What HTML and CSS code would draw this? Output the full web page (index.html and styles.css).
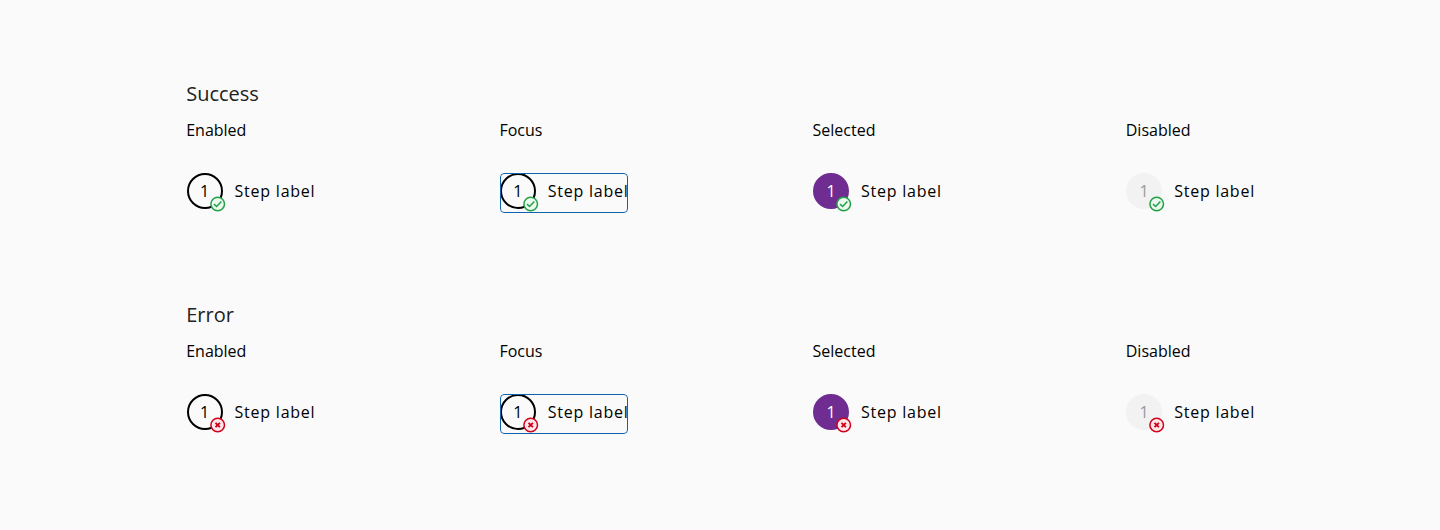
FILE: index.html
```html
<!DOCTYPE html>
<html lang="en">
<head>
<meta charset="utf-8">
<title>Step states</title>
<link rel="stylesheet" href="styles.css">
</head>
<body>
<svg width="0" height="0" class="defs">
  <symbol id="ok" viewBox="0 0 16 16"><circle cx="7.7" cy="8" r="6.8" fill="#eafaef" stroke="#24a148" stroke-width="1.5"/><path d="M4 8.1 6.6 10.5 11.4 5.5" fill="none" stroke="#24a148" stroke-width="1.5"/></symbol>
  <symbol id="err" viewBox="0 0 16 16"><circle cx="7.7" cy="8" r="6.8" fill="#ffe6e9" stroke="#d0011b" stroke-width="1.5"/><path d="M5.5 5.8l4.4 4.4M9.9 5.8l-4.4 4.4" fill="none" stroke="#d0011b" stroke-width="1.9"/></symbol>
</svg>
<main class="page">
  <section class="group">
    <h2 class="title">Success</h2>
    <div class="states">
      <div class="state"><h3 class="name">Enabled</h3><div class="step"><span class="num">1<svg class="badge"><use href="#ok"/></svg></span><span class="label">Step label</span></div></div>
      <div class="state"><h3 class="name">Focus</h3><div class="step focus"><span class="num">1<svg class="badge"><use href="#ok"/></svg></span><span class="label">Step label</span></div></div>
      <div class="state"><h3 class="name">Selected</h3><div class="step selected"><span class="num">1<svg class="badge"><use href="#ok"/></svg></span><span class="label">Step label</span></div></div>
      <div class="state"><h3 class="name">Disabled</h3><div class="step disabled"><span class="num">1<svg class="badge"><use href="#ok"/></svg></span><span class="label">Step label</span></div></div>
    </div>
  </section>
  <section class="group">
    <h2 class="title">Error</h2>
    <div class="states">
      <div class="state"><h3 class="name">Enabled</h3><div class="step"><span class="num">1<svg class="badge"><use href="#err"/></svg></span><span class="label">Step label</span></div></div>
      <div class="state"><h3 class="name">Focus</h3><div class="step focus"><span class="num">1<svg class="badge"><use href="#err"/></svg></span><span class="label">Step label</span></div></div>
      <div class="state"><h3 class="name">Selected</h3><div class="step selected"><span class="num">1<svg class="badge"><use href="#err"/></svg></span><span class="label">Step label</span></div></div>
      <div class="state"><h3 class="name">Disabled</h3><div class="step disabled"><span class="num">1<svg class="badge"><use href="#err"/></svg></span><span class="label">Step label</span></div></div>
    </div>
  </section>
</main>
</body>
</html>
```
FILE: styles.css
```css
* { box-sizing: border-box; }
body { margin: 0; background: #fafafa; color: #000; font-family: "Open Sans", sans-serif; }
.defs { display: block; }
.page { padding: 80px 0 0 186.2px; height: 530px; overflow: hidden; }
.group { height: 221px; }
.title { margin: 0; font-size: 20px; line-height: 27px; font-weight: 400; color: #222; }
.states { display: grid; grid-template-columns: repeat(4, 313.2px); }
.name { margin: 12px 0 32px; font-size: 16px; line-height: 22px; font-weight: 400; }
.step { display: flex; align-items: flex-start; gap: 12px; width: 128px; height: 40px; margin-left: .4px; border-radius: 4px; white-space: nowrap; }
.focus { position: relative; overflow: hidden; }
.focus::after { content: ""; position: absolute; inset: 0; border: 1px solid #0f62ae; border-radius: 4px; }
.num { position: relative; width: 36px; height: 36px; flex: none; border: 2px solid #000; border-radius: 50%; text-align: center; font-size: 16px; line-height: 32px; }
.badge { position: absolute; left: 21px; top: 21px; width: 16px; height: 16px; }
.label { font-size: 16px; line-height: 36px; letter-spacing: .77px; }
.selected .num { background: #6f2c91; border-color: #6f2c91; color: #fff; }
.disabled .num { background: #f2f2f2; border-color: #f2f2f2; color: #999; }
```
